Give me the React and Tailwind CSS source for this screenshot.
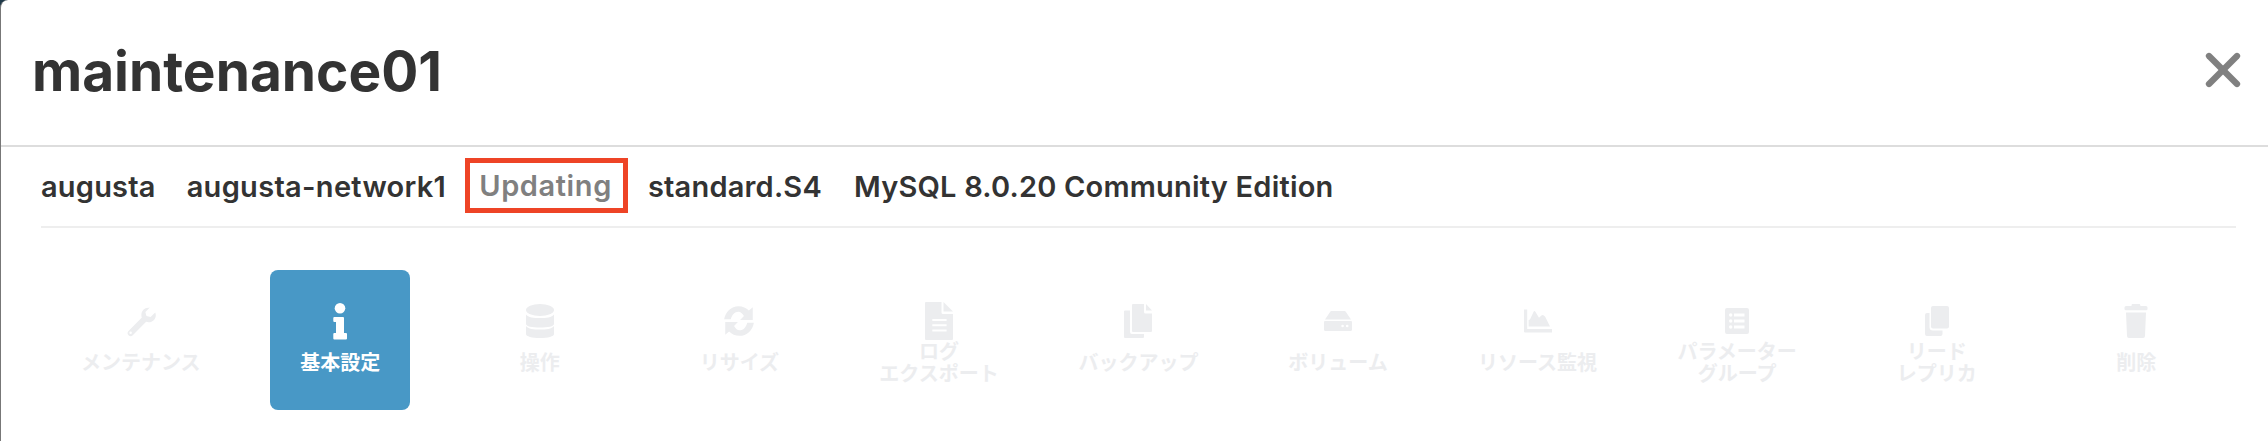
import { X } from 'lucide-react';

const SANS = 'font-["Inter","Noto_Sans_CJK_JP",sans-serif]';

const ICONS = {
  wrench: (
    <g transform="translate(3.2 3.2) scale(.82)">
      <path
        fillRule="evenodd"
        d="M27 2c-4.800 0-8.500 3.900-8.500 8.600 0 1.200.2 2.300.6 3.300L2.800 30.200c-1.500 1.500-1.500 3.800 0 5.200 1.400 1.500 3.800 1.500 5.200 0l16.300-16.300c1 .4 2.100.6 3.200.6 4.800 0 8.600-3.800 8.600-8.600 0-1.300-.3-2.500-.7-3.500l-5.700 5.700-5-1.300-1.300-5 5.700-5.700C28 2.100 27.600 2 27 2zM5.400 31a1.500 1.500 0 1 1 0 3 1.500 1.500 0 0 1 0-3z"
      />
    </g>
  ),
  info: (
    <>
      <circle cx="18" cy="5.300" r="5.300" />
      <path d="M12.300 14H21a1 1 0 0 1 1 1v15h2a1 1 0 0 1 1 1v4.500a1 1 0 0 1-1 1H12.300a1 1 0 0 1-1-1V31a1 1 0 0 1 1-1H14V19h-1.700a1 1 0 0 1-1-1v-3a1 1 0 0 1 1-1z" />
    </>
  ),
  database: (
    <>
      <ellipse cx="18" cy="7" rx="14" ry="6" />
      <path d="M4 11.500c2 3 8 3.500 14 3.500s12-.5 14-3.500V21c0 2.500-6 3.500-14 3.500S4 23.500 4 21z" />
      <path d="M4 23c2 3 8 3.500 14 3.500s12-.5 14-3.500v8c0 2.500-6 4-14 4S4 33.500 4 31z" />
    </>
  ),
  refresh: (
    <g transform="translate(-1.800 -1.800) scale(1.1)">
      <path d="M4.500 16.500C5.500 9.500 11 4.500 17.500 4.500c4 0 7 1.500 9.500 4l3.500-3v11.500H19l3.500-3.500C21 11 19.500 9.500 17.500 9.500c-3.500 0-6 3-7 7z" />
      <path d="M31.500 19.500c-1 7-6.500 12-13 12-4 0-7-1.500-9.500-4l-3.500 3V19H17l-3.500 3.500C15 25 16.500 26.500 18.500 26.500c3.500 0 6-3 7-7z" />
    </g>
  ),
  file: (
    <>
      <path
        fillRule="evenodd"
        d="M5 -1h15.500v10.500a1.500 1.500 0 0 0 1.500 1.500h10v25a1 1 0 0 1-1 1H5a1 1 0 0 1-1-1V0a1 1 0 0 1 1-1zM11.300 16v2h14.300v-2zM11.300 21.300v2h14.300v-2zM11.300 26.600v2h14.300v-2z"
      />
      <path d="M22.500 -1L32 8.500h-9.500z" />
    </>
  ),
  files: (
    <>
      <path d="M13 1h11v8a1.500 1.500 0 0 0 1.500 1.500H32V28a1 1 0 0 1-1 1H13a1 1 0 0 1-1-1V2a1 1 0 0 1 1-1z" />
      <path d="M26 1l6 6.500h-6z" />
      <path d="M5 7.500h5V29a2 2 0 0 0 2 2h12v3a1 1 0 0 1-1 1H5a1 1 0 0 1-1-1V8.500a1 1 0 0 1 1-1z" />
    </>
  ),
  hdd: (
    <path
      fillRule="evenodd"
      d="M11.500 8h13a1.500 1.500 0 0 1 1.300.8l5.200 7.700H5l5.200-7.700a1.500 1.500 0 0 1 1.300-.8zM5 18h26a1 1 0 0 1 1 1v7.500a1.500 1.500 0 0 1-1.500 1.500h-25A1.500 1.500 0 0 1 4 26.500V19a1 1 0 0 1 1-1zm16.300 5a1.300 1.300 0 1 0 2.600 0 1.300 1.300 0 0 0-2.600 0zm4.600 0a1.300 1.300 0 1 0 2.600 0 1.300 1.300 0 0 0-2.600 0z"
    />
  ),
  chart: (
    <>
      <path d="M4 6.500h3.200V26H32v3.500H5a1 1 0 0 1-1-1z" />
      <path d="M8.600 23.500V17l1.400-.5 3.600-7.800c.4-.9 1.300-.9 1.800 0l3.600 6 2.400-2.200c.8-.7 1.800-.7 2.400 0l1.400 1.200L30 23.500z" />
    </>
  ),
  list: (
    <path
      fillRule="evenodd"
      d="M8 5h20a2 2 0 0 1 2 2v22a2 2 0 0 1-2 2H8a2 2 0 0 1-2-2V7a2 2 0 0 1 2-2zM10 12a1.700 1.700 0 1 0 3.400 0 1.700 1.700 0 0 0-3.400 0zM15 10.500v3h10.500v-3zM10 18a1.700 1.700 0 1 0 3.400 0 1.700 1.700 0 0 0-3.400 0zM15 16.500v3h10.500v-3zM10 24a1.700 1.700 0 1 0 3.400 0 1.700 1.700 0 0 0-3.400 0zM15 22.500v3h10.500v-3z"
    />
  ),
  clone: (
    <>
      <rect x="12" y="3" width="18" height="22.500" rx="2" />
      <path d="M8 10h2.500v14a3.500 3.500 0 0 0 3.500 3.500h9.500V31a2 2 0 0 1-2 2H8a2 2 0 0 1-2-2V12a2 2 0 0 1 2-2z" />
    </>
  ),
  trash: (
    <>
      <path d="M14.500 1h6.800a1 1 0 0 1 .9 1l.3 1h5.500a1.500 1.500 0 0 1 1.500 1.500V6a1.300 1.300 0 0 1-1.300 1.300H7.800A1.300 1.300 0 0 1 6.500 6V4.500A1.500 1.500 0 0 1 8 3h5.500l.1-1a1 1 0 0 1 .9-1z" />
      <path d="M8 9.500h20l-1 23.500a2 2 0 0 1-2 2H11a2 2 0 0 1-2-2z" />
    </>
  ),
};

const ITEMS = [
  { icon: 'wrench', label: ['メンテナンス'] },
  { icon: 'info', label: ['基本設定'], active: true },
  { icon: 'database', label: ['操作'] },
  { icon: 'refresh', label: ['リサイズ'] },
  { icon: 'file', label: ['ログ', 'エクスポート'] },
  { icon: 'files', label: ['バックアップ'] },
  { icon: 'hdd', label: ['ボリューム'] },
  { icon: 'chart', label: ['リソース監視'] },
  { icon: 'list', label: ['パラメーター', 'グループ'] },
  { icon: 'clone', label: ['リード', 'レプリカ'] },
  { icon: 'trash', label: ['削除'] },
];

function MenuItem({ icon, label, active }) {
  return (
    <div className="flex justify-center">
      <div
        className={`flex h-[140px] w-[140px] flex-col items-center rounded-lg pt-[33px] ${
          active ? 'bg-[#4898c6] text-white' : 'text-[#ecedef]'
        }`}
      >
        <svg viewBox="0 0 36 36" className="h-9 w-9 shrink-0 overflow-visible" fill="currentColor">
          {ICONS[icon]}
        </svg>
        <div className="flex h-[48px] w-full flex-col items-center justify-center text-center text-[20px] leading-[22px] font-bold">
          {label.map((line) => (
            <span key={line}>{line}</span>
          ))}
        </div>
      </div>
    </div>
  );
}

export default function App() {
  return (
    <div className="h-[441px] w-[2268px] overflow-hidden bg-[#1f3a4a]">
      <div className={`h-full rounded-tl-lg border-l border-[#777] bg-white text-[#333] ${SANS}`}>
        <header className="flex h-[147px] items-center justify-between border-b-2 border-[#ddd] pr-[17px] pl-[31px]">
          <h1 className="mb-[2px] text-[55px] leading-none font-bold">maintenance01</h1>
          <X className="mb-[6px] text-[#808080]" size={56} strokeWidth={2.7} />
        </header>
        <div className="mr-[32px] ml-[40px]">
          <div className="flex h-[81px] items-center border-b-2 border-[#eee] text-[29px] font-semibold tracking-[0.2px]">
            <span>augusta</span>
            <span className="ml-[31px] tracking-[0.3px]">augusta-network1</span>
            <span className="mb-[2px] ml-[19px] flex h-[55px] items-center border-[5px] border-[#ee4426] pr-[11px] pl-[9px] tracking-[0.6px] text-[#808080]">
              Updating
            </span>
            <span className="ml-[20px]">standard.S4</span>
            <span className="ml-[32px]">MySQL 8.0.20 Community Edition</span>
          </div>
          <div className="mt-[42px] grid grid-cols-11">
            {ITEMS.map((item) => (
              <MenuItem key={item.icon} {...item} />
            ))}
          </div>
        </div>
      </div>
    </div>
  );
}
